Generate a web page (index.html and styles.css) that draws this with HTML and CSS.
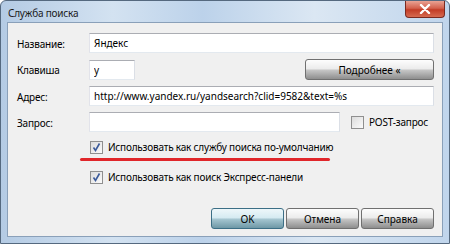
FILE: index.html
```html
<!DOCTYPE html>
<html lang="ru">

<head>
    <meta charset="UTF-8">
    <title>Служба поиска</title>
    <link rel="stylesheet" href="styles.css">
</head>

<body>

    <div class="window">
        <div class="titlebar">
            <span class="title">Служба поиска</span>
            <div class="close">
                <svg width="12" height="10" viewBox="0 0 12 10">
                    <path d="M2 1 L10 9 M10 1 L2 9" stroke="#fff" stroke-width="2.4" stroke-linecap="round"/>
                </svg>
            </div>
        </div>

        <div class="client">
            <div class="form">
                <label class="label">Название:</label>
                <input class="field" type="text" value="Яндекс">

                <label class="label">Клавиша</label>
                <div class="row">
                    <input class="field key" type="text" value="y">
                    <button class="btn more">Подробнее «</button>
                </div>

                <label class="label">Адрес:</label>
                <input class="field" type="text" value="http://www.yandex.ru/yandsearch?clid=9582&amp;text=%s">

                <label class="label">Запрос:</label>
                <div class="row">
                    <input class="field query" type="text" value="">
                    <span class="check">
                        <span class="box"></span>
                        POST-запрос
                    </span>
                </div>
            </div>

            <div class="options">
                <div class="check">
                    <span class="box">
                        <svg width="11" height="11" viewBox="0 0 11 11">
                            <path d="M2.5 5.5 L4.5 8.5 L8.5 1.5" fill="none" stroke="#3b5a9a" stroke-width="1.6"/>
                        </svg>
                    </span>
                    Использовать как службу поиска по-умолчанию
                </div>
                <div class="underline"></div>
                <div class="check">
                    <span class="box">
                        <svg width="11" height="11" viewBox="0 0 11 11">
                            <path d="M2.5 5.5 L4.5 8.5 L8.5 1.5" fill="none" stroke="#3b5a9a" stroke-width="1.6"/>
                        </svg>
                    </span>
                    Использовать как поиск Экспресс-панели
                </div>
            </div>

            <div class="buttons">
                <button class="btn ok">OK</button>
                <button class="btn">Отмена</button>
                <button class="btn">Справка</button>
            </div>
        </div>
    </div>

</body>

</html>
```

FILE: styles.css
```css
body {
    margin: 0;
    font-family: 'Noto Sans', 'Open Sans', sans-serif;
    font-size: 10px;
    letter-spacing: -0.2px;
    color: #000;
}

.window {
    width: 450px;
    height: 244px;
    box-sizing: border-box;
    border: 1px solid #55697f;
    border-radius: 6px 6px 0 0;
    background: linear-gradient(to right, #b4cbe4, #d3e2f1 25%, #bcd2ea 45%, #dbe7f3 70%, #c0d5ec);
    display: flex;
    flex-direction: column;
}

.titlebar {
    height: 21px;
    display: flex;
    align-items: flex-start;
}

.title {
    margin: 5px 0 0 7px;
    color: #1a1a1a;
}

.close {
    margin-left: auto;
    margin-right: 4px;
    width: 38px;
    height: 16px;
    border: 1px solid #7a2a20;
    border-top: none;
    border-radius: 0 0 4px 4px;
    background: linear-gradient(#e9a394, #d3614d 45%, #c23c26 55%, #d66a50);
    display: flex;
    align-items: center;
    justify-content: center;
}

.client {
    flex: 1;
    margin: 0 6px 6px 6px;
    border: 1px solid #8aa0b9;
    background-color: #f0f0f0;
    padding: 10px 8px 0 9px;
    display: flex;
    flex-direction: column;
}

.form {
    display: grid;
    grid-template-columns: 72px 1fr;
    row-gap: 6px;
    align-items: center;
}

.label {
    padding-top: 1px;
}

.row {
    display: flex;
    align-items: center;
}

.field {
    height: 20px;
    box-sizing: border-box;
    border: 1px solid #abadb3;
    border-color: #abadb3 #dbdfe6 #e3e9ef #e2e3ea;
    background: #fff;
    padding: 0 4px;
    font: inherit;
    color: #000;
    width: 100%;
}

.field.key {
    width: 46px;
}

.field.query {
    width: 251px;
}

.btn {
    height: 21px;
    box-sizing: border-box;
    border: 1px solid #707070;
    border-radius: 3px;
    background: linear-gradient(#fdfdfd, #ececec 45%, #c4c4c4 55%, #8e8e8e);
    font: inherit;
    color: #000;
    padding: 0;
}

.btn.more {
    margin-left: auto;
    width: 129px;
}

.btn.ok {
    border-color: #3c6f86;
    background: linear-gradient(#eef7fa, #d6ebf2 45%, #a3c4cf 55%, #6e98a6);
}

.check {
    display: flex;
    align-items: center;
    gap: 5px;
    white-space: nowrap;
}

.row .check {
    margin-left: 11px;
}

.box {
    width: 13px;
    height: 13px;
    box-sizing: border-box;
    border: 1px solid #8f8f8f;
    background: linear-gradient(135deg, #dcdcdc, #fbfbfb);
    display: flex;
    align-items: center;
    justify-content: center;
}

.options {
    margin: 8px 0 0 73px;
}

.underline {
    width: 250px;
    height: 3px;
    border-radius: 2px;
    background-color: #e0262a;
    margin: 4px 0 9px -10px;
}

.buttons {
    margin-top: auto;
    margin-bottom: 7px;
    display: flex;
    justify-content: flex-end;
    gap: 2px;
}

.buttons .btn {
    width: 73px;
}
```
